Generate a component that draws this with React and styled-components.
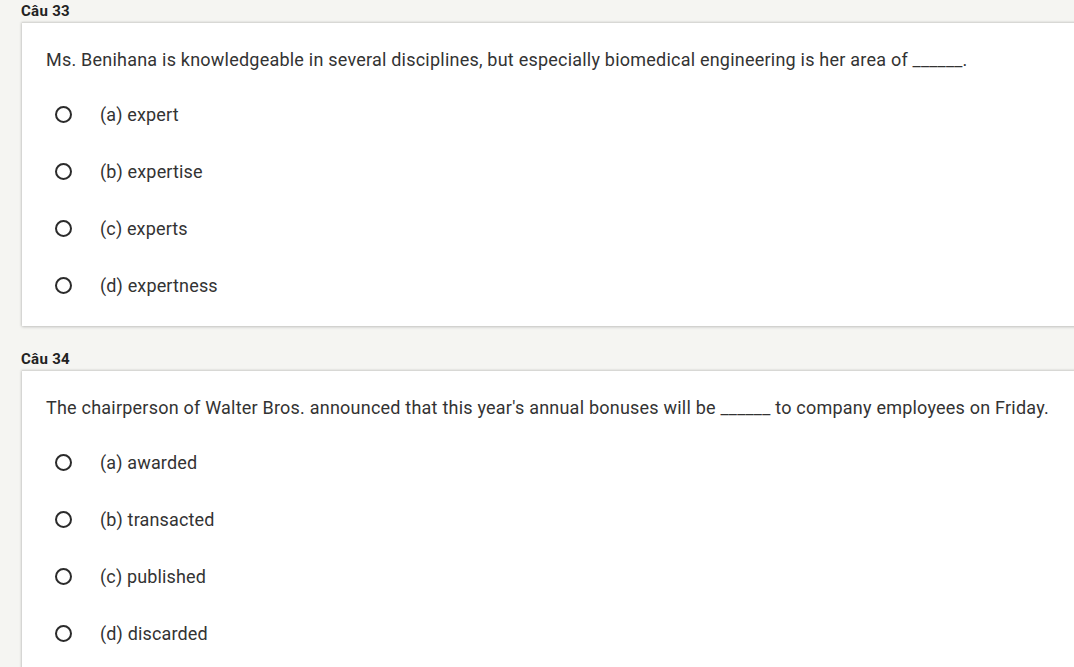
import styled, { createGlobalStyle } from 'styled-components'

const GlobalStyle = createGlobalStyle`
  html, body {
    margin: 0;
    padding: 0;
    background: #f5f5f2;
    overflow: hidden;
  }
  body {
    font-family: Roboto, "Liberation Sans", Arial, sans-serif;
    color: #333;
  }
`

const questions = [
  {
    label: 'Câu 33',
    text: 'Ms. Benihana is knowledgeable in several disciplines, but especially biomedical engineering is her area of ______.',
    options: ['(a) expert', '(b) expertise', '(c) experts', '(d) expertness'],
  },
  {
    label: 'Câu 34',
    text: "The chairperson of Walter Bros. announced that this year's annual bonuses will be ______ to company employees on Friday.",
    options: ['(a) awarded', '(b) transacted', '(c) published', '(d) discarded'],
  },
]

const Page = styled.div`
  padding: 2px 0 0 21px;
  width: 1100px;
`

const Block = styled.section`
  margin-bottom: 24px;
`

const Label = styled.div`
  font-size: 15px;
  font-weight: 700;
  letter-spacing: 0.3px;
  color: #222;
  line-height: 18px;
  height: 20px;
`

const Card = styled.div`
  background: #fff;
  margin-left: 1px;
  border-top: 1px solid #d8d8d5;
  box-shadow: 0 1px 3px rgba(0, 0, 0, 0.2), -1px 0 2px rgba(0, 0, 0, 0.08);
  padding: 25px 24px 12px;
`

const Question = styled.p`
  margin: 0 0 14px;
  font-size: 18px;
  letter-spacing: 0.22px;
  line-height: 24px;
  color: #333;
  white-space: nowrap;
`

const Option = styled.label`
  display: flex;
  align-items: center;
  height: 57px;
`

const Radio = styled.span`
  box-sizing: border-box;
  width: 17px;
  height: 17px;
  border: 2px solid #2b2b2b;
  border-radius: 50%;
  margin-left: 9px;
  margin-right: 28px;
  flex: none;
`

const OptionText = styled.span`
  font-size: 18px;
  letter-spacing: 0.15px;
  color: #333;
`

export default function App() {
  return (
    <>
      <GlobalStyle />
      <Page>
        {questions.map((q) => (
          <Block key={q.label}>
            <Label>{q.label}</Label>
            <Card>
              <Question>{q.text}</Question>
              {q.options.map((o) => (
                <Option key={o}>
                  <Radio />
                  <OptionText>{o}</OptionText>
                </Option>
              ))}
            </Card>
          </Block>
        ))}
      </Page>
    </>
  )
}
